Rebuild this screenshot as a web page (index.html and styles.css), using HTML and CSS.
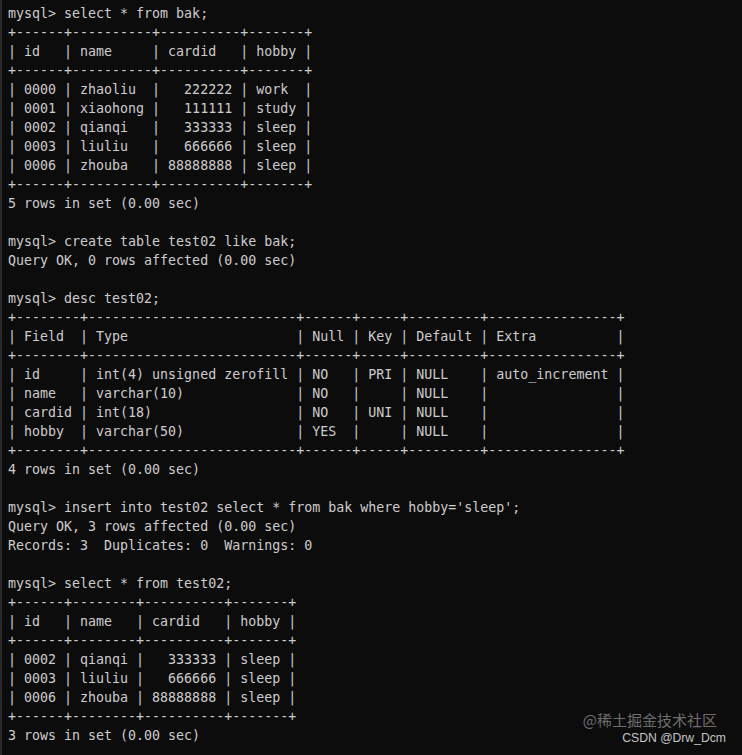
FILE: index.html
```html
<!DOCTYPE html>
<html>
<head>
<meta charset="utf-8">
<link rel="stylesheet" href="styles.css">
</head>
<body>
<div class="terminal">
<pre class="output">mysql&gt; select * from bak;
+------+----------+----------+-------+
| id   | name     | cardid   | hobby |
+------+----------+----------+-------+
| 0000 | zhaoliu  |   222222 | work  |
| 0001 | xiaohong |   111111 | study |
| 0002 | qianqi   |   333333 | sleep |
| 0003 | liuliu   |   666666 | sleep |
| 0006 | zhouba   | 88888888 | sleep |
+------+----------+----------+-------+
5 rows in set (0.00 sec)

mysql&gt; create table test02 like bak;
Query OK, 0 rows affected (0.00 sec)

mysql&gt; desc test02;
+--------+--------------------------+------+-----+---------+----------------+
| Field  | Type                     | Null | Key | Default | Extra          |
+--------+--------------------------+------+-----+---------+----------------+
| id     | int(4) unsigned zerofill | NO   | PRI | NULL    | auto_increment |
| name   | varchar(10)              | NO   |     | NULL    |                |
| cardid | int(18)                  | NO   | UNI | NULL    |                |
| hobby  | varchar(50)              | YES  |     | NULL    |                |
+--------+--------------------------+------+-----+---------+----------------+
4 rows in set (0.00 sec)

mysql&gt; insert into test02 select * from bak where hobby='sleep';
Query OK, 3 rows affected (0.00 sec)
Records: 3  Duplicates: 0  Warnings: 0

mysql&gt; select * from test02;
+------+--------+----------+-------+
| id   | name   | cardid   | hobby |
+------+--------+----------+-------+
| 0002 | qianqi |   333333 | sleep |
| 0003 | liuliu |   666666 | sleep |
| 0006 | zhouba | 88888888 | sleep |
+------+--------+----------+-------+
3 rows in set (0.00 sec)</pre>
<div class="watermark">
<span class="wm-juejin">@稀土掘金技术社区</span>
<span class="wm-csdn">CSDN @Drw_Dcm</span>
</div>
</div>
</body>
</html>
```
FILE: styles.css
```css
html, body {
  margin: 0;
  padding: 0;
  background: #0c0c0c;
}
.terminal {
  position: relative;
  width: 742px;
  height: 755px;
  background: #0c0c0c;
  overflow: hidden;
  border-left: 2px solid #2a2a2a;
  box-sizing: border-box;
}
.output {
  margin: 0;
  padding: 4px 0 0 6px;
  font-family: "DejaVu Sans Mono", "Liberation Mono", monospace;
  font-size: 13.3px;
  line-height: 19px;
  color: #cccccc;
  white-space: pre;
}
.watermark {
  position: absolute;
  right: 16px;
  bottom: 10px;
  display: flex;
  flex-direction: column;
  align-items: flex-end;
  font-family: "Liberation Sans", "Noto Sans CJK SC", sans-serif;
}
.wm-juejin {
  font-family: "Noto Sans CJK SC", sans-serif;
  font-size: 15px;
  line-height: 15px;
  color: #6e6e6e;
  margin-right: 9px;
  margin-bottom: 5px;
}
.wm-csdn {
  font-size: 12.2px;
  line-height: 13px;
  color: #c4c4c4;
}
```
